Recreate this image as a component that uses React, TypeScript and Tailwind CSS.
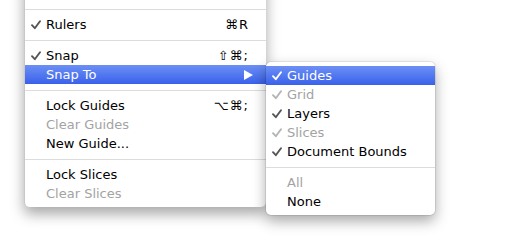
import React from 'react';

type Item =
  | { kind: 'sep' }
  | { kind: 'blank' }
  | {
      kind: 'item';
      label: string;
      checked?: boolean;
      disabled?: boolean;
      active?: boolean;
      shortcut?: string;
      submenu?: boolean;
    };

const mainItems: Item[] = [
  { kind: 'blank' },
  { kind: 'sep' },
  { kind: 'item', label: 'Rulers', checked: true, shortcut: '⌘R' },
  { kind: 'sep' },
  { kind: 'item', label: 'Snap', checked: true, shortcut: '⇧⌘;' },
  { kind: 'item', label: 'Snap To', active: true, submenu: true },
  { kind: 'sep' },
  { kind: 'item', label: 'Lock Guides', shortcut: '⌥⌘;' },
  { kind: 'item', label: 'Clear Guides', disabled: true },
  { kind: 'item', label: 'New Guide...' },
  { kind: 'sep' },
  { kind: 'item', label: 'Lock Slices' },
  { kind: 'item', label: 'Clear Slices', disabled: true },
];

const subItems: Item[] = [
  { kind: 'item', label: 'Guides', checked: true, active: true },
  { kind: 'item', label: 'Grid', checked: true, disabled: true },
  { kind: 'item', label: 'Layers', checked: true },
  { kind: 'item', label: 'Slices', checked: true, disabled: true },
  { kind: 'item', label: 'Document Bounds', checked: true },
  { kind: 'sep' },
  { kind: 'item', label: 'All', disabled: true },
  { kind: 'item', label: 'None' },
];

const Check = ({ color }: { color: string }) => (
  <svg width="10" height="10" viewBox="0 0 10 10">
    <path d="M1 5.2 L3.8 8.2 L9 1.2" fill="none" stroke={color} strokeWidth="1.9" strokeLinecap="round" strokeLinejoin="round" />
  </svg>
);

const MenuRows = ({ items }: { items: Item[] }) => (
  <>
    {items.map((it, i) => {
      if (it.kind === 'sep')
        return (
          <div key={i} className="h-[12px] flex items-center">
            <div className="h-px w-full bg-[#dcdcdc]" />
          </div>
        );
      if (it.kind === 'blank') return <div key={i} className="h-[19px]" />;
      const textColor = it.active ? 'text-white' : it.disabled ? 'text-[#a3a3a3]' : 'text-black';
      const checkColor = it.active ? '#ffffff' : it.disabled ? '#b4b4b4' : '#555555';
      return (
        <div
          key={i}
          className={`h-[19px] flex items-center pl-[6px] pr-[17px] ${
            it.active ? 'bg-gradient-to-b from-[#6d8ff4] to-[#3a60ea]' : ''
          } ${textColor}`}
        >
          <span className="w-[15px] flex">{it.checked && <Check color={checkColor} />}</span>
          <span className="flex-1">{it.label}</span>
          {it.shortcut && <span className="tracking-[1px]">{it.shortcut}</span>}
          {it.submenu && (
            <svg width="9" height="10" viewBox="0 0 9 10" className="mr-[-4px]">
              <path d="M0 0 L9 5 L0 10 Z" fill="#ffffff" />
            </svg>
          )}
        </div>
      );
    })}
  </>
);

export default function App() {
  return (
    <div
      className="w-[517px] h-[247px] bg-white overflow-hidden text-[13px] leading-none flex items-start pl-[24px]"
      style={{ fontFamily: '"DejaVu Sans", "Lucida Grande", sans-serif' }}
    >
      <div className="mt-[-20px] w-[242px] py-[4px] bg-white border-l border-[#c8c8c8] rounded-b-[5px] shadow-[0_7px_14px_rgba(0,0,0,0.35)]">
        <MenuRows items={mainItems} />
      </div>
      <div className="mt-[62px] w-[169px] py-[4px] bg-white rounded-[5px] shadow-[0_6px_14px_rgba(0,0,0,0.35),0_0_0_1px_rgba(0,0,0,0.08)]">
        <MenuRows items={subItems} />
      </div>
    </div>
  );
}
